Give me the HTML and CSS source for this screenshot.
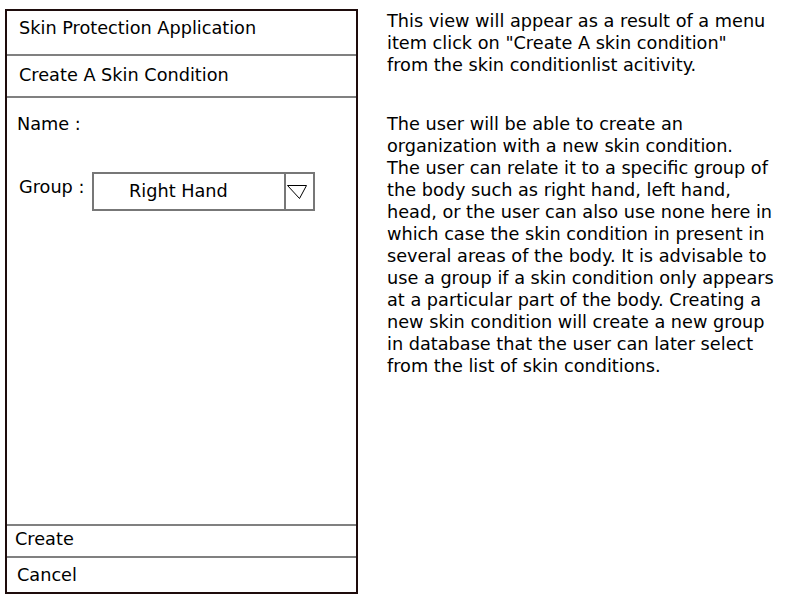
FILE: index.html
```html
<!DOCTYPE html>
<html>
<head>
<meta charset="utf-8">
<link rel="stylesheet" href="styles.css">
</head>
<body>
<div class="panel">
  <div class="row-title">Skin Protection Application</div>
  <div class="divider"></div>
  <div class="row-sub">Create A Skin Condition</div>
  <div class="divider"></div>
  <div class="form">
    <div class="name">Name :</div>
    <div class="group-row">
      <div class="group-label">Group :</div>
      <div class="select">
        <div class="select-value">Right Hand</div>
        <div class="select-arrow">
          <svg width="27" height="35" viewBox="0 0 27 35"><polygon points="1.5,11.5 20.5,11.5 13.5,24.5" fill="none" stroke="#000" stroke-width="1"/></svg>
        </div>
      </div>
    </div>
  </div>
  <div class="divider"></div>
  <div class="row-create">Create</div>
  <div class="divider"></div>
  <div class="row-cancel">Cancel</div>
</div>
<div class="notes">
  <p class="p1">This view will appear as a result of a menu<br>item click on "Create A skin condition"<br>from the skin conditionlist acitivity.</p>
  <p class="p2">The user will be able to create an<br>organization with a new skin condition.<br>The user can relate it to a specific group of<br>the body such as right hand, left hand,<br>head, or the user can also use none here in<br>which case the skin condition in present in<br>several areas of the body. It is advisable to<br>use a group if a skin condition only appears<br>at a particular part of the body. Creating a<br>new skin condition will create a new group<br>in database that the user can later select<br>from the list of skin conditions.</p>
</div>
</body>
</html>
```

FILE: styles.css
```css
html, body {
  margin: 0;
  padding: 0;
  background: #fff;
}
body {
  display: flex;
  align-items: flex-start;
  font-family: "DejaVu Sans", sans-serif;
  font-size: 17.7px;
  line-height: 22px;
  color: #000;
}
.panel {
  margin-left: 5px;
  margin-top: 9px;
  width: 349px;
  height: 581px;
  flex: none;
  border: 2px solid #1e0c0c;
  display: flex;
  flex-direction: column;
}
.divider {
  height: 2px;
  background: #808080;
  flex: none;
}
.row-title {
  height: 43px;
  box-sizing: border-box;
  padding: 6px 0 0 12px;
  flex: none;
}
.row-sub {
  height: 40px;
  box-sizing: border-box;
  padding: 8px 0 0 12px;
  flex: none;
}
.form {
  flex: 1;
  padding: 15px 0 0 0;
}
.name {
  padding-left: 10px;
}
.group-row {
  display: flex;
  align-items: flex-start;
  margin-top: 37px;
}
.group-label {
  width: 85px;
  flex: none;
  box-sizing: border-box;
  padding: 4px 0 0 12px;
}
.select {
  width: 223px;
  height: 39px;
  flex: none;
  box-sizing: border-box;
  border: 2px solid #777;
  display: flex;
}
.select-value {
  flex: 1;
  padding: 6px 0 0 35px;
}
.select-arrow {
  width: 27px;
  border-left: 2px solid #777;
  display: flex;
}
.select-arrow svg {
  display: block;
}
.row-create {
  height: 30px;
  box-sizing: border-box;
  padding: 2px 0 0 8px;
  flex: none;
}
.row-cancel {
  height: 34px;
  flex: none;
  box-sizing: border-box;
  padding: 6px 0 0 10px;
}
.notes {
  margin-left: 29px;
  margin-top: 10px;
  white-space: nowrap;
}
.notes p {
  margin: 0;
}
.notes .p2 {
  margin-top: 37px;
}
```
